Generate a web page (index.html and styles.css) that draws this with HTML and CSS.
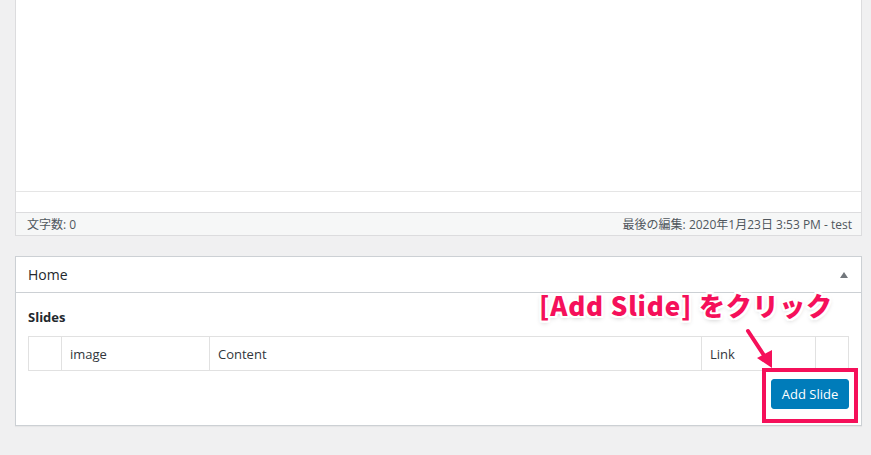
FILE: index.html
```html
<!DOCTYPE html>
<html lang="ja">
<head>
<meta charset="utf-8">
<link rel="stylesheet" href="styles.css">
</head>
<body>
<div class="page">
  <div class="editor">
    <div class="editor-body"></div>
    <div class="editor-gap"></div>
    <div class="status">
      <span>文字数: 0</span>
      <span>最後の編集: 2020年1月23日 3:53 PM - test</span>
    </div>
  </div>

  <div class="postbox">
    <div class="postbox-head">
      <h2>Home</h2>
      <span class="toggle"></span>
    </div>
    <div class="postbox-inside">
      <h3>Slides</h3>
      <table class="slides">
        <tr>
          <td class="c-handle"></td>
          <td class="c-image">image</td>
          <td class="c-content">Content</td>
          <td class="c-link">Link</td>
          <td class="c-rm"></td>
        </tr>
      </table>
      <div class="actions">
        <button class="btn-primary">Add Slide</button>
      </div>
    </div>
  </div>
</div>

<div class="callout">[Add Slide] をクリック</div>
<svg class="arrow" width="871" height="455" viewBox="0 0 871 455">
  <line x1="748" y1="331" x2="767" y2="360" stroke="#f5105a" stroke-width="4" stroke-linecap="round"/>
  <polygon points="772,368 757,358 772,350" fill="#f5105a"/>
</svg>
<div class="highlight"></div>
</body>
</html>
```
FILE: styles.css
```css
html, body {
  margin: 0;
  padding: 0;
}
body {
  background: #f0f0f1;
  font-family: "Open Sans", "Noto Sans", "Noto Sans CJK JP", sans-serif;
  font-size: 13px;
  color: #444;
  width: 871px;
  height: 455px;
  overflow: hidden;
  position: relative;
}
.page {
  padding: 0 9px 0 15px;
}
.editor {
  background: #fff;
  border: 1px solid #dcdcde;
  border-top: none;
}
.editor-body {
  height: 191px;
  border-bottom: 1px solid #e5e5e5;
}
.editor-gap {
  height: 20px;
}
.status {
  display: flex;
  justify-content: space-between;
  align-items: center;
  height: 22px;
  padding: 0 9px 0 11px;
  background: #f6f7f7;
  border-top: 1px solid #dcdcde;
  font-size: 12px;
  color: #50575e;
}
.postbox {
  margin-top: 20px;
  background: #fff;
  border: 1px solid #ccd0d4;
  box-shadow: 0 1px 1px rgba(0,0,0,0.04);
}
.postbox-head {
  height: 35px;
  display: flex;
  align-items: center;
  justify-content: space-between;
  padding: 0 12px 0 12px;
  border-bottom: 1px solid #ccd0d4;
}
.postbox-head h2 {
  margin: 0;
  font-size: 14px;
  font-weight: 400;
  color: #23282d;
}
.toggle {
  width: 0;
  height: 0;
  border-left: 4px solid transparent;
  border-right: 4px solid transparent;
  border-bottom: 6px solid #72777c;
  margin-right: 1px;
}
.postbox-inside {
  padding: 16px 12px 16px 12px;
}
.postbox-inside h3 {
  margin: 0 0 11px 0;
  font-size: 13px;
  font-weight: 700;
  color: #23282d;
  line-height: 16px;
}
.slides {
  width: 821px;
  border-collapse: collapse;
  table-layout: fixed;
}
.slides td {
  border: 1px solid #e1e1e1;
  height: 33px;
  padding: 0 8px;
  color: #32373c;
  font-size: 13px;
}
.c-handle { width: 16px; }
.c-image { width: 131px; }
.c-content { width: 475px; }
.c-link { width: 97px; }
.c-rm { width: 16px; }
.actions {
  display: flex;
  justify-content: flex-end;
  margin-top: 8px;
}
.btn-primary {
  width: 78px;
  height: 30px;
  margin-right: 0;
  background: #007cba;
  border: 1px solid #007cba;
  border-radius: 3px;
  color: #fff;
  font-family: "Open Sans", "Noto Sans", sans-serif;
  font-size: 13px;
  padding: 0;
}
.callout {
  position: absolute;
  left: 539px;
  top: 287px;
  font-family: "Noto Sans CJK JP", "Noto Sans", sans-serif;
  font-weight: 900;
  font-size: 26px;
  line-height: 36px;
  color: #f5105a;
  letter-spacing: 0.8px;
  text-shadow:
    2px 0 0 #fff, -2px 0 0 #fff, 0 2px 0 #fff, 0 -2px 0 #fff,
    2px 2px 0 #fff, -2px -2px 0 #fff, 2px -2px 0 #fff, -2px 2px 0 #fff,
    0 2px 5px rgba(0,0,0,0.25);
}
.arrow {
  position: absolute;
  left: 0;
  top: 0;
}
.highlight {
  position: absolute;
  left: 762px;
  top: 368px;
  width: 88px;
  height: 47px;
  border: 4px solid #f5105a;
}
```
